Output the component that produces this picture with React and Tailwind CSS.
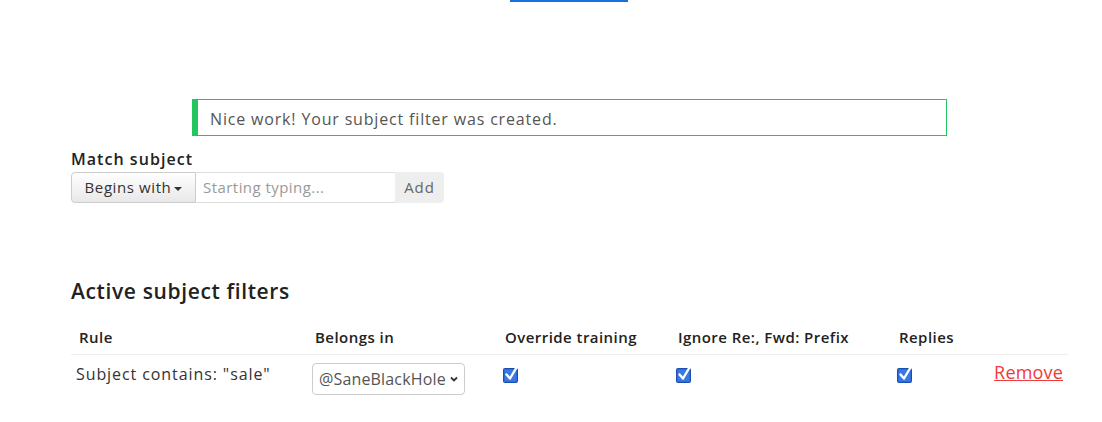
import React from "react";

function Check() {
  return (
    <svg width="18" height="18" viewBox="0 0 18 18" className="block">
      <rect x="1.5" y="3.5" width="14" height="14" rx="1" fill="#2e6bd8" stroke="#1d4fae" strokeWidth="1" />
      <rect x="3" y="5" width="11" height="11" fill="#3a78e4" />
      <path d="M4.5 9.5 L8 13.5 L14.5 2.5" fill="none" stroke="#ffffff" strokeWidth="2.4" strokeLinecap="round" strokeLinejoin="round" />
    </svg>
  );
}

export default function App() {
  const font = { fontFamily: '"Open Sans", "DejaVu Sans", sans-serif' };
  return (
    <div className="w-[1102px] h-[422px] bg-white overflow-hidden relative" style={font}>
      <div className="absolute left-[510px] top-0 w-[118px] h-[2px] bg-[#1a6fe0]" />
      <div className="pl-[71px] w-[1068px] pt-[99px]">
        <div className="ml-[121px] w-[755px] h-[37px] border border-[#22c55e] border-l-[6px] flex items-center pl-[12px] pt-[3px] text-[16px] tracking-[0.052em] text-[#555555]">
          Nice work! Your subject filter was created.
        </div>
        <div className="mt-[12px] text-[16px] font-semibold tracking-[0.065em] text-[#222222] leading-[22px]">Match subject</div>
        <div className="mt-[2px] flex h-[31px] w-[373px]">
          <div className="w-[125px] flex items-center justify-center gap-[3px] border border-[#cccccc] rounded-l-[4px] bg-gradient-to-b from-white to-[#e8e8e8] text-[15px] tracking-[0.04em] text-[#333333]">
            Begins with
            <span className="inline-block w-0 h-0 border-l-[4px] border-r-[4px] border-t-[4px] border-l-transparent border-r-transparent border-t-[#333333] mt-[2px]" />
          </div>
          <div className="w-[199px] flex items-center border-y border-[#dddddd] pl-[7px] text-[15px] tracking-[0.03em] text-[#999999]">
            Starting typing...
          </div>
          <div className="w-[49px] flex items-center justify-center bg-[#eeeeee] rounded-r-[4px] text-[15px] tracking-[0.06em] text-[#666666]">
            Add
          </div>
        </div>
        <div className="mt-[74px] text-[21px] font-semibold tracking-[0.03em] text-[#222222] leading-[28px]">Active subject filters</div>
        <div className="mt-[15px] grid grid-cols-[236px_190px_173px_221px_98px_79px] border-b border-[#eeeeee] h-[35px] items-center text-[15px] font-semibold tracking-[0.03em] text-[#222222]">
          <div className="pl-[8px]">Rule</div>
          <div className="pl-[8px]">Belongs in</div>
          <div className="pl-[8px]">Override training</div>
          <div className="pl-[8px]">Ignore Re:, Fwd: Prefix</div>
          <div className="pl-[8px]">Replies</div>
          <div />
        </div>
        <div className="grid grid-cols-[236px_190px_173px_221px_98px_79px] pt-[5px] text-[16px] text-[#333333]">
          <div className="pl-[5px] pt-[2px] tracking-[0.057em]">Subject contains: "sale"</div>
          <div className="pl-[5px] pt-[3px]">
            <div className="w-[153px] h-[32px] border border-[#cccccc] rounded-[4px] flex items-center justify-between pl-[6px] pr-[5px] text-[16px] tracking-[0.01em] text-[#555555]">
              <span>@SaneBlackHole</span>
              <svg width="10" height="10" viewBox="0 0 10 10"><path d="M2 3.5 L5 6.5 L8 3.5" fill="none" stroke="#333" strokeWidth="1.8" /></svg>
            </div>
          </div>
          <div className="pl-[5px] pt-[5px]"><Check /></div>
          <div className="pl-[5px] pt-[5px]"><Check /></div>
          <div className="pl-[5px] pt-[5px]"><Check /></div>
          <div className="text-right pr-[5px] leading-[24px]">
            <a className="text-[#ee3b3b] underline text-[18px] tracking-[0.01em]" href="#">Remove</a>
          </div>
        </div>
      </div>
    </div>
  );
}
